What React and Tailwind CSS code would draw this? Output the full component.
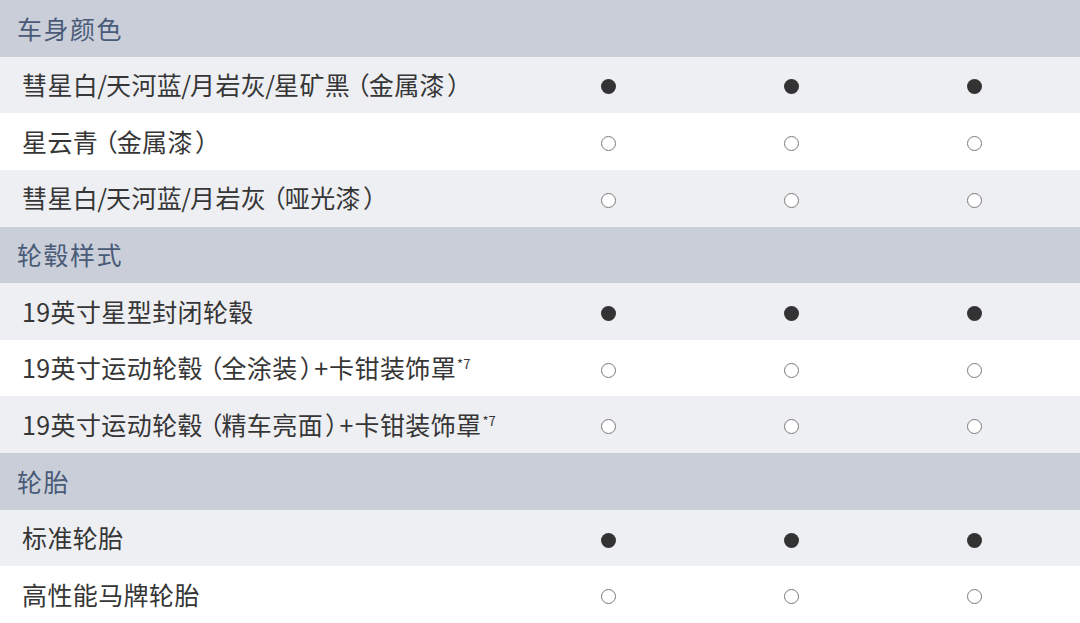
const SECTIONS = [
  {
    title: '车身颜色',
    rows: [
      { label: '彗星白/天河蓝/月岩灰/星矿黑（金属漆）', std: true },
      { label: '星云青（金属漆）', std: false },
      { label: '彗星白/天河蓝/月岩灰（哑光漆）', std: false },
    ],
  },
  {
    title: '轮毂样式',
    rows: [
      { label: '19英寸星型封闭轮毂', std: true },
      { label: '19英寸运动轮毂（全涂装）+卡钳装饰罩', note: '*7', std: false },
      { label: '19英寸运动轮毂（精车亮面）+卡钳装饰罩', note: '*7', std: false },
    ],
  },
  {
    title: '轮胎',
    rows: [
      { label: '标准轮胎', std: true },
      { label: '高性能马牌轮胎', std: false },
    ],
  },
];

// the source uses airy parentheses and a tight slash
function Label({ text }) {
  const parts = text.split(/([（）/+])/).filter(Boolean);
  return parts.map((p, i) => {
    if (p === '（') return <span key={i} className="ml-[7px] -mr-[1px] tracking-normal [font-feature-settings:'halt']">（</span>;
    if (p === '）') return <span key={i} className="ml-[2px] mr-[2px] tracking-normal [font-feature-settings:'halt']">）</span>;
    if (p === '/') return <span key={i} className="-mx-[1px] tracking-normal">/</span>;
    if (p === '+') return <span key={i} className="mr-[1px] tracking-normal">+</span>;
    return <span key={i}>{p}</span>;
  });
}

function Dot({ filled }) {
  return filled ? (
    <span className="block w-[15px] h-[15px] rounded-full bg-[#333333]" />
  ) : (
    <span className="block w-[15px] h-[15px] rounded-full border-[1.5px] border-[#7a7a7a] bg-white" />
  );
}

export default function App() {
  return (
    <div
      className="w-[1080px] h-[623px] grid grid-rows-11 bg-white overflow-hidden"
      style={{ fontFamily: '"Noto Sans CJK SC", "Noto Sans", sans-serif' }}
    >
      {SECTIONS.map((s) => (
        <>
          <div key={s.title} className="bg-[#c9ced9] flex items-center pl-[17px] text-[25px] tracking-[1.5px] text-[#4a5b78]">
            {s.title}
          </div>
          {s.rows.map((r, i) => (
            <div
              key={r.label}
              className={`grid grid-cols-[517px_183px_183px_183px_1fr] items-center ${i % 2 === 0 ? 'bg-[#eeeff3]' : 'bg-white'}`}
            >
              <div className="pl-[22px] text-[25px] tracking-[0.4px] text-[#363636] whitespace-nowrap">
                <Label text={r.label} />
                {r.note && <span className="inline-block ml-[1px] text-[13px] tracking-normal relative -top-[9px]">{r.note}</span>}
              </div>
              {[0, 1, 2].map((c) => (
                <div key={c} className="flex justify-center mt-1">
                  <Dot filled={r.std} />
                </div>
              ))}
              <div />
            </div>
          ))}
        </>
      ))}
    </div>
  );
}
